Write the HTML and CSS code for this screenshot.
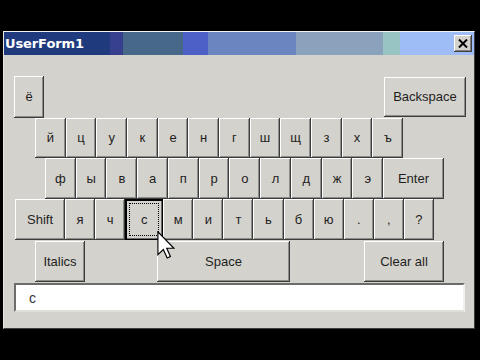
FILE: index.html
```html
<!DOCTYPE html>
<html>
<head>
<meta charset="utf-8">
<link rel="stylesheet" href="styles.css">
</head>
<body>
<div class="stage">
  <div class="window">
    <div class="titlebar">
      <span class="title">UserForm1</span>
      <div class="close">
        <svg width="10" height="9" viewBox="0 0 10 9"><path d="M1 0.5 L9 8.5 M9 0.5 L1 8.5" stroke="#000" stroke-width="2" fill="none"/></svg>
      </div>
    </div>
    <div class="client">
      <div class="row row0">
        <div class="key k30">ё</div>
        <div class="key backspace">Backspace</div>
      </div>
      <div class="row row1">
        <div class="key">й</div><div class="key">ц</div><div class="key">у</div><div class="key">к</div><div class="key">е</div><div class="key">н</div><div class="key">г</div><div class="key">ш</div><div class="key">щ</div><div class="key">з</div><div class="key">х</div><div class="key">ъ</div>
      </div>
      <div class="row row2">
        <div class="keys k11">
          <div class="key">ф</div><div class="key">ы</div><div class="key">в</div><div class="key">а</div><div class="key">п</div><div class="key">р</div><div class="key">о</div><div class="key">л</div><div class="key">д</div><div class="key">ж</div><div class="key">э</div>
        </div>
        <div class="key enter">Enter</div>
      </div>
      <div class="row row3">
        <div class="key shift">Shift</div>
        <div class="keys k12">
          <div class="key">я</div><div class="key">ч</div><div class="key focused"><span class="focusring">с</span></div><div class="key">м</div><div class="key">и</div><div class="key">т</div><div class="key">ь</div><div class="key">б</div><div class="key">ю</div><div class="key">.</div><div class="key">,</div><div class="key">?</div>
        </div>
      </div>
      <div class="row row4">
        <div class="key italics">Italics</div>
        <div class="gap g1"></div>
        <div class="key space">Space</div>
        <div class="gap g2"></div>
        <div class="key clear">Clear all</div>
      </div>
      <div class="field">с</div>
    </div>
  </div>
  <svg class="cursor" width="18" height="28" viewBox="0 0 12 19">
    <path d="M0.5 0.5 L0.5 16 L4.2 12.6 L6.8 18.3 L9 17.3 L6.5 11.7 L11.4 11.7 Z" fill="#fff" stroke="#000" stroke-width="0.8" stroke-linejoin="miter"/>
  </svg>
</div>
</body>
</html>
```
FILE: styles.css
```css
html, body {
  margin: 0;
  padding: 0;
  background: #000;
}
.stage {
  position: relative;
  width: 480px;
  height: 360px;
  padding: 31px 0 0 3px;
  box-sizing: border-box;
  overflow: hidden;
}
.window {
  width: 472px;
  height: 298px;
  box-sizing: border-box;
  background: #d4d2cc;
  border: 1px solid;
  border-color: #f4f4f0 #404040 #404040 #e8e6e0;
  display: flex;
  flex-direction: column;
}
.titlebar {
  height: 23px;
  display: flex;
  align-items: center;
  justify-content: space-between;
  padding: 0 2px 0 1px;
  background: linear-gradient(to right,
    #1f3b7d 0, #1f3b7d 106px,
    #36408c 106px, #36408c 119px,
    #48688a 119px, #48688a 179px,
    #4c60c8 179px, #4c60c8 204px,
    #6a85c0 204px, #6a85c0 292px,
    #8aa2bc 292px, #8aa2bc 379px,
    #98c4c4 379px, #98c4c4 396px,
    #9ebcf6 396px, #9ebcf6 100%);
}
.title {
  font-family: "DejaVu Sans", sans-serif;
  font-weight: bold;
  font-size: 13px;
  color: #fff;
  letter-spacing: -0.1px;
}
.close {
  width: 18px;
  height: 17px;
  box-sizing: border-box;
  background: #d4d2cc;
  box-shadow: inset -1px -1px #404040, inset 1px 1px #fff, inset -2px -2px #808080;
  display: flex;
  align-items: center;
  justify-content: center;
}
.client {
  flex: 1;
  padding: 21px 8px 0 10px;
  display: flex;
  flex-direction: column;
}
.row {
  display: flex;
}
.row0 { height: 42px; justify-content: space-between; }
.row1 { height: 40px; margin-left: 21px; width: 368px; }
.row2 { height: 41px; margin-left: 31px; }
.row3 { height: 41px; margin-left: 1px; }
.row4 { height: 41px; margin-left: 21px; margin-top: 1px; }
.keys { display: flex; }
.k11 { width: 338px; }
.k12 { width: 369px; }
.key {
  flex: 1;
  box-sizing: border-box;
  background: #d4d2cc;
  box-shadow: inset -1px -1px #3c3c3c, inset 1px 1px #ffffff, inset -2px -2px #8c8c88;
  display: flex;
  align-items: center;
  justify-content: center;
  font-family: "Liberation Sans", Arial, sans-serif;
  font-size: 13px;
  color: #1e1e1e;
  padding-bottom: 1px;
}
.k30 { flex: none; width: 30px; }
.backspace { flex: none; width: 82px; height: 40px; margin-top: 1px; }
.enter { flex: none; width: 61px; }
.shift { flex: none; width: 50px; }
.italics { flex: none; width: 50px; }
.space { flex: none; width: 133px; }
.clear { flex: none; width: 80px; }
.gap.g1 { width: 72px; }
.gap.g2 { width: 74px; }
.key.focused {
  border: 1px solid #000;
  border-left-width: 2px;
  border-top-width: 2px;
  box-shadow: inset -1px -1px #6c6c6c;
  padding: 2px 3px 3px 2px;
}
.focusring {
  flex: 1;
  align-self: stretch;
  display: flex;
  align-items: center;
  justify-content: center;
  outline: 1px dotted #000;
  outline-offset: -1px;
}
.field {
  margin-top: 1px;
  width: 451px;
  height: 29px;
  box-sizing: border-box;
  background: #fff;
  border: 2px solid;
  border-color: #6c6c6c #f0f0f0 #e0ded8 #6c6c6c;
  font-family: "Liberation Sans", Arial, sans-serif;
  font-size: 14px;
  color: #333;
  display: flex;
  align-items: center;
  padding-left: 13px;
}
.cursor {
  position: absolute;
  left: 157px;
  top: 231px;
}
```
